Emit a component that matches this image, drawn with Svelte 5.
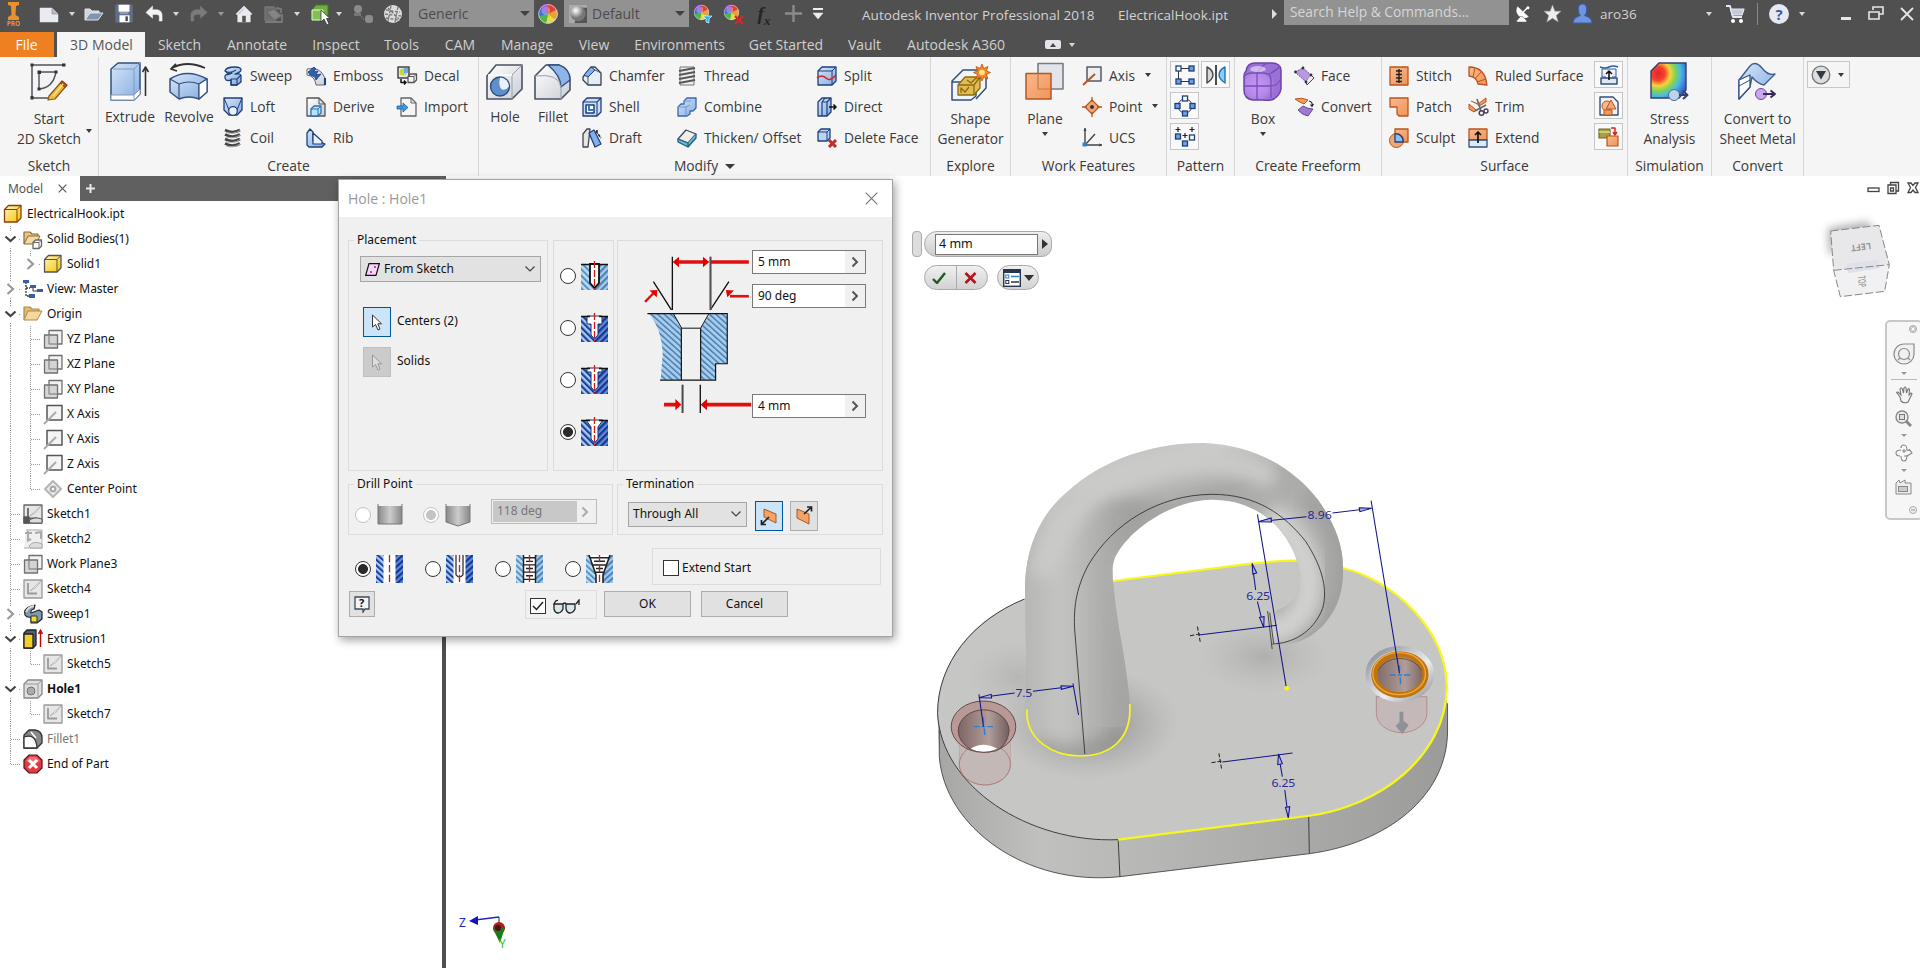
<script>
  const p = (d, fill = 'none', stroke = '#1d3f7d', sw = 1.3, extra = '') =>
    `<path d="${d}" fill="${fill}" stroke="${stroke}" stroke-width="${sw}" stroke-linejoin="round" ${extra}/>`;
  const B = 'url(#gBlue)', G = 'url(#gGrey)', O = 'url(#gOrange)', Y = 'url(#gYellow)';
  const OR = '#b8561f';
  const cube = (x, y, s, d, fill, st = '#1d3f7d') =>
    p(`M${x} ${y + d}L${x + d} ${y}H${x + s + d}V${y + s}L${x + s} ${y + s + d}H${x}Z`, fill, st) +
    p(`M${x} ${y + d}H${x + s}V${y + s + d}M${x + s} ${y + d}L${x + s + d} ${y}`, 'none', st, 1);

  const planePair = p('M6 1.500H19V15H6Z', '#f2f2f2', '#707070') + p('M1.500 6H14.500V19H1.500Z', '#cccccccc', '#707070') + p('M6 6V15H14.500', 'none', '#888', 1);
  const axisGrey = p('M4 1.500H19V16H4Z', '#f4f4f4', '#555', 1.500) + p('M1 20L13 8', 'none', '#aaa', 2);
  const sketchIcon = (c) => p('M1 1H19V19H1Z', '#e6e6e6', c, 1.300) + p('M5 4V14.500H14', 'none', c, 1.800) + p('M7 12Q13 10 18 2L9 10Z', '#fff', '#aaa', .8);
  const wheel = '<circle cx="10" cy="10" r="8.500" fill="#3b6fd8"/><path d="M10 10L2 5A9 9 0 0 1 10 1Z" fill="#8a3fd0"/><path d="M10 10V1A9 9 0 0 1 18 6Z" fill="#e3402f"/><path d="M10 10L18 6A9 9 0 0 1 17 15Z" fill="#f0a030"/><path d="M10 10L17 15A9 9 0 0 1 8 18.500Z" fill="#e8dc3c"/><path d="M10 10L8 18.500A9 9 0 0 1 1.500 12Z" fill="#4fb648"/><circle cx="8" cy="7" r="4" fill="#fff" opacity=".3"/><circle cx="10" cy="10" r="8.500" fill="none" stroke="#ccd" stroke-width=".8"/>';

  const icons = {
    sweep: p('M3 14Q0 9 5 8L9 7Q4 8 2 5Q3 1 12 1Q18 1 18 4Q18 6 12 8Q18 7 18 10V16L14 19H8V14Q5 15 3 14Z', B) + p('M8 13H14V19H8ZM14 13L18 9M2 5Q7 8 13 4M9 7L4 9', 'none', '#1d3f7d', 1.1),
    loft: p('M1 1H19V13L14 18H6L1 13Z', B) + p('M1 1L6 13M19 1L14 13', 'none', '#1d3f7d', 1) + '<circle cx="10" cy="14" r="4.300" fill="#eef4fd" stroke="#1d3f7d" stroke-width="1.200"/>',
    coil: [2, 6.5, 11, 15.500].map((y) => p(`M2 ${y}Q10 ${y + 4} 17 ${y}`, 'none', '#444', 2.600) + p(`M3 ${y + 2.500}Q10 ${y + 5} 17 ${y + .5}`, 'none', '#aaa', 1)).join(''),
    emboss: p('M1 3Q14 0 19 12V19L10 19Q9 10 1 9Z', G, '#667', 1) + p('M2 6L8 1L10 3L7 6L12 5L10 9L15 8L10 14L9 11L4 9Z', '#2f62b0', '#173d7c', .8) + p('M19 12V19', 'none', '#1d3f7d', 2),
    derive: p('M1 19V1H13L19 7V19Z', G, '#555') + p('M13 1V7H19', 'none', '#555', 1) + cube(5, 9, 7, 3, '#bfe0fb', '#2572b5'),
    rib: p('M1 5L4 1L7 4V13H13L19 16L16 19H3L1 17Z', B) + p('M7 5L16 13V16H7Z', '#e9f1fc', '#1d3f7d', 1.200),
    decal: p('M1 1H12V12H1Z', '#dfe7ef', '#444', 1.500) + '<circle cx="6" cy="6" r="3.500" fill="#c9d63a"/><rect x="7" y="2" width="4" height="5" fill="#6dabd8"/>' + cube(11, 8, 6, 2.500, '#f4f4f4', '#555') + p('M4 13V16.500H9M7 14.500L9 16.500L7 18.500', 'none', '#111', 1.500),
    import: p('M4 1H14L19 6V19H4Z', '#f5f5f5', '#666') + p('M14 1V6H19', 'none', '#666', 1) + p('M0 9H6V6L11 10.500L6 15V12H0Z', '#3b9ae0', '#1f5f9e', .8),
    chamfer: p('M1 11L9 1H13L19 7V19H6L1 14Z', '#e6ecf4', '#333f55') + p('M2 9L9 1L13 4L6 11Z', '#7fb1ea', '#1d3f7d', 1) + p('M6 11V19M13 4L19 7', 'none', '#555', 1),
    shell: p('M1 5L5 1H19V15L15 19H1Z', '#ccdcf3') + p('M1 5H15V19M15 5L19 1', 'none', '#1d3f7d', 1.100) + p('M4 8H12V16H4Z', '#fff', '#173d7c', 1.500) + p('M7 8V13H12', 'none', '#3a74c8', 2),
    draft: p('M1 6L5 1H8L6 19H1Z', '#e6e6e6', '#445') + p('M7 5L12 2L19 16L13 19Z', '#83b0e8') + p('M14 3L19 10M15 2V6', 'none', '#222', 1.500, 'stroke-dasharray="3 1"'),
    thread: p('M3 1H17V19H3Z', '#eee', '#777', 1) + [3, 7, 11, 15].map((y) => p(`M2 ${y + 2}L18 ${y - 1}`, 'none', '#555', 1.800)).join(''),
    combine: p('M7 4L10 1H19V11L16 14H13V17L10 19H1V10L4 7H7Z', B, '#3568ae') + p('M1 10H9V19M7 4H14M9 10L13 8', 'none', '#6f97cf', 1),
    thicken: p('M1 11L9 2L19 6L11 15Z', '#f0f0ea', '#445') + p('M1 11V14L11 19V15ZM11 15V19L19 10V6', '#6cb4dc', '#23617f'),
    split: p('M1 5L5 1H19V15L15 19H1Z', B) + p('M1 5H15M15 5L19 1M15 5V19', 'none', '#1d3f7d', 1) + p('M0 12Q5 8 9 12T19 9', 'none', '#d22', 1.600),
    direct: p('M1 5L5 1H14V15L10 19H1Z', B) + p('M5 5H10V19M5 5V19M5 5L8 1M10 5L14 1', 'none', '#1d3f7d', 1.200) + p('M12 10H19M16.500 7.500L19 10L16.500 12.500', 'none', '#111', 1.600),
    delface: cube(1, 1, 9, 3, '#bcd3f2') + p('M12 12L19 19M19 12L12 19', 'none', '#c22a2a', 3),
    axis: p('M5 1H19V15H5Z', '#eceef1', '#555b63', 1.500) + p('M1 19L13 8', 'none', '#b8561f', 2),
    point: p('M10 3L17 10L10 17L3 10Z', '#f3a674', OR, 1.200) + p('M10 0V5M10 15V20M0 10H5M15 10H20', 'none', OR, 1.300) + '<circle cx="10" cy="10" r="2" fill="#333"/>',
    ucs: p('M3 1V17H19M3 17L13 6', 'none', '#444', 1.400) + p('M2 3L3 0L4 3M17 16L20 17L17 18', 'none', '#444', 1) + '<rect x=".5" y="14.500" width="4" height="4" fill="#2a86d8"/>',
    rectpat: [[1, 1, '#fff'], [14, 1, '#6f9fe8'], [1, 14, '#6f9fe8'], [14, 14, '#6f9fe8']].map(([x, y, f]) => `<rect x="${x}" y="${y}" width="5" height="5" fill="${f}" stroke="#1d3f7d" stroke-width="1.300"/>`).join('') + p('M6 3.500H14M3.500 6V14M6 16.500H14', 'none', '#333', 1),
    mirror: p('M1 2Q7 5 7 10Q7 14 1 18Z', '#d8d8d8', '#444', 1.400) + p('M10 0V20', 'none', '#111', 1.500) + p('M19 2Q13 5 13 10Q13 14 19 18Z', '#8bcdf0', '#1c77ad', 1.400),
    circpat: '<circle cx="10" cy="10" r="7" fill="none" stroke="#444"/>' + [[7.500, 0, '#fff'], [7.500, 15, '#6f9fe8'], [0, 7.500, '#6f9fe8'], [15, 7.500, '#6f9fe8']].map(([x, y, f]) => `<rect x="${x}" y="${y}" width="5" height="5" fill="${f}" stroke="#1d3f7d" stroke-width="1.300"/>`).join(''),
    skpat: [[0, 7, '#6f9fe8'], [7, 14, '#6f9fe8'], [14, 8, '#fff']].map(([x, y, f]) => `<rect x="${x + .5}" y="${y}" width="5" height="5" fill="${f}" stroke="#1d3f7d" stroke-width="1.300"/>`).join('') + p('M3 0V5M.5 2.500H5.500M17 0V5M14.500 2.500H19.500M10 6V11M7.500 8.500H12.500', 'none', '#222', 1.200),
    face: p('M1 6L9 2L17 9L12 16Z', '#b898e4', '#6a4c98', 1, 'stroke-dasharray="2 1"') + p('M17 9L20 12L13 19L12 16', '#eee', '#444', 1) + [[1.500, 6], [9, 2], [17, 9], [12, 16]].map(([x, y]) => `<circle cx="${x}" cy="${y}" r="1.400" fill="#333"/>`).join(''),
    convertf: p('M1 2Q8 0 14 3L10 7Q5 5 1 2Z', '#f39a5c', OR, 1) + p('M4 13L9 9Q14 12 19 12L14 19Q8 18 4 13Z', '#9f78d2', '#6a4c98', 1) + p('M15 4Q19 5 18 9M16.500 7.500L18 9.500L19.500 7', 'none', '#222', 1.100),
    stitch: p('M1 1H19V19H1Z', O, OR) + p('M10 3V17M7 5H13M7 8.500H13M7 12H13M7 15.500H13', 'none', '#222', 1.400),
    patch: p('M1 1H19V19H10L8 17V10H1Z', O, OR),
    sculpt: p('M6 1H19V14H6Z', O, OR) + '<circle cx="7.500" cy="12.500" r="7" fill="#f3a674" stroke="#b8561f"/>' + p('M6 6A7 7 0 0 1 14 14H6Z', '#8fc1f0', '#1d3f7d'),
    ruled: p('M1 1Q17 1 19 19L10 18Q9 11 1 10Z', O, OR) + p('M7 2L5 11M13 6L7 13M18 13L9 16', 'none', OR, 1),
    trim: p('M3 4L10 7L18 1V5L11 9M1 7L8 13L6 15L1 12Z', '#f39a5c', OR, 1) + p('M9 2L13 14M18 8L7 14', 'none', '#666', 1.600) + '<circle cx="13.500" cy="16" r="2.300" fill="none" stroke="#445" stroke-width="1.500"/><circle cx="18" cy="14" r="2" fill="none" stroke="#445" stroke-width="1.400"/>',
    extend: p('M1 1H19V12H1Z', O, OR) + p('M1 12H19V19H1Z', '#dce9f6', '#34507a') + p('M10 15V4M7 7L10 4L13 7', 'none', '#111', 1.700),
    sbtn1: p('M1 2Q6 4 10 2T19 2', 'none', '#2a5fa8', 1.500) + p('M3 4V12H7M17 4V12H13M3 4H17', '#dfeaf7', '#2a5fa8', 1) + p('M2 13H18V19H2Z', '#dfe7f0', '#34507a', 1.500) + p('M10 15V6M7 9L10 6L13 9', 'none', '#111', 1.600),
    sbtn2: p('M1 1H14L19 6V19H1Z', '#eef3f9', '#34507a', 1.400) + '<circle cx="8" cy="10" r="5" fill="#f7b98c" stroke="#b8561f"/>' + p('M12 4L17 13H7Z', '#f3a674', OR, 1) + p('M5 14H13V19H5Z', '#f39a5c', OR, 1),
    sbtn3: p('M0 2H11V11H0Z', '#a8a040', '#6f6a20', 1.200) + p('M0 5H11', 'none', '#e8e6b0', 1.200) + p('M8 9H19V19H8Z', O, OR, 1.200) + p('M12 1H16V7M14 5L16 8L18 5', 'none', '#d22', 1.500),

    b_sketch: p('M3 3H34M3 3V36H22', 'none', '#50525c', 1.500) + '<rect x="1.500" y="1.500" width="3" height="3" fill="#333"/><rect x="33" y="1.500" width="3.500" height="3" fill="#333"/><rect x="1.500" y="34" width="3" height="3.500" fill="#333"/>' + p('M10 10H27M10 10V27Q24 26 27 10', '#f3f3f3', '#50525c', 1.400) + '<rect x="8.500" y="8.500" width="3.500" height="3.500" fill="#333"/><rect x="25.500" y="8.500" width="3" height="3" fill="#333"/><rect x="8.500" y="25.500" width="3" height="3" fill="#333"/>' + p('M20 34L33 19L38 23L26 37L19 38Z', '#f2b93a', '#8a5a1a', 1.200) + p('M33 19L38 23L36 25.500L31 21Z', '#b8523a', '#7a3418', .8) + p('M24 34L34 22', 'none', '#fae08a', 1.500),
    b_extrude: p('M1 7L8 1H30V32L24 38H1Z', B, '#33507f', 1.500) + p('M1 33L24 33L30 27V32L24 38H1Z', '#fff', '#8a97ac', 1) + p('M3 7H24V37M24 7L30 1', 'none', '#7b9dca', 1) + p('M35.500 34V6M32.500 10L35.500 5L38.500 10', 'none', '#333', 1.600),
    b_revolve: p('M3 6Q18 -2 36 6M7 2L2 7L8 9', 'none', '#333', 1.800) + p('M1 17Q18 6 38 17V30L30 37Q20 33 10 37L1 30Z', B, '#33507f', 1.500) + p('M1 17L10 22Q20 18 30 22L38 17M10 22V37M30 22V37', 'none', '#33507f', 1.200) + p('M30 22L38 17V30L30 37Z', '#fff', '#33507f', 1.200),
    b_hole: p('M2 14L11 3H37V27L27 37H2Z', G, '#4a5161', 1.600) + p('M27 13L37 3M27 13V37', 'none', '#9aa0aa', 1) + p('M3 13H27', 'none', '#fff', 1.500) + '<circle cx="15" cy="24.500" r="9.500" fill="#5e8ecb" stroke="#2f4d7e" stroke-width="1.400"/><path d="M15 15.500A9 9 0 0 1 24 24.500Q21 28.500 17 27.500Q13 24.500 15 15.500Z" fill="#e8f1fc"/>',
    b_fillet: p('M2 14L13 3H26Q37 7 37 18V28L28 37H2Z', G, '#4a5161', 1.600) + p('M15 3H26Q37 7 37 18L28 25Q28 14 15 3Z', '#8db5ea', '#2f4d7e', 1.300) + p('M28 24V37M2 14Q26 11 28 25', 'none', '#9aa0aa', 1),
    b_shape: p('M1 19L12 8H31L25 21V34L20 38H1Z', '#f1f4f8', '#34507a', 1.500) + p('M25 20L35 12V26L25 37M1 20H25', 'none', '#34507a', 1.500) + p('M7 23L14 15H29V26L23 33H7Z', '#e0bd4e', '#8c6a14', 1.300) + p('M7 23H23V33M10 31V26L14 30L18 25M23 23L29 15M16 18L20 21L25 16', 'none', '#8c6a14', 1.300) + '<path d="M31 2L32.800 6.500L37 4.500L35.500 9L39.500 10.500L35.500 12.500L37 17L32.800 15L31 19L29.200 15L25 17L26.500 12.500L22.500 10.500L26.500 9L25 4.500L29.200 6.500Z" fill="#f08a24" stroke="#c65010" stroke-width=".8"/><circle cx="31" cy="10.500" r="2.800" fill="#ffe28a"/>',
    b_plane: p('M13 1.500H38V27H13Z', '#e2e4e9', '#777c88', 1.600) + p('M1 11.500H26V37H1Z', O, OR, 1.500) + p('M13 11.500V27H26', 'none', '#c77a4a', 1.200),
    b_box: '<path d="M3 9Q4 1 12 1H29Q37 1 38 8V27Q37 33 31 37Q27 39 20 38H10Q1 37 1 28V14Q1 11 3 9Z" fill="url(#gPurple)" stroke="#6d43a8" stroke-width="1.500"/>' + p('M1 15Q3 11 9 11H20Q28 11 28 18V36M14 11V38M1 24H28Q34 24 38 17M14 11Q17 5 24 1M26 12Q34 8 37 4', 'none', '#7a4fb8', 1.300) + '<ellipse cx="15" cy="7" rx="8" ry="3" fill="#fff" opacity=".5"/>',
    b_stress: '<path d="M1 9L9 1H36V28L29 36H1Z" fill="url(#gStress)" stroke="#33406f" stroke-width="1.400"/>' + '<circle cx="24" cy="33" r="5.500" fill="#bcd3ee" stroke="#4a6c9c"/>' + p('M29 33H36M33 29L37.500 33L33 37', 'none', '#34406f', 2),
    b_sheet: p('M1 18L12 4Q17 -2 24 6Q30 14 37 12L26 23Q20 22 14 15L12 25L1 37Z', B, '#3d5f94', 1.400) + p('M1 18L12 13V25L1 37Z', '#fff', '#33507f', 1.300) + p('M1 24L12 18', 'none', '#33507f', 1) + '<circle cx="23" cy="32" r="5.500" fill="#c9a9ec" stroke="#6d43a8"/>' + p('M25 32H36M32.500 28.500L37 32L32.500 35.500', 'none', '#3c2560', 2),

    t_part: cube(1.500, 1.500, 12.500, 4, Y, '#8a3d10'),
    t_folder2: p('M1 15V3H7L9 5H15V8', '#e8c586', '#8a6a35', 1.200) + p('M1 15L5 7H17L13 15Z', '#f1d9a8', '#8a6a35', 1) + cube(10, 11, 6, 2.500, '#fff', '#666'),
    t_solid: cube(1.500, 1.500, 12.500, 4, Y, '#555'),
    t_view: p('M3 3V17H7M3 9H7', 'none', '#333', 1.300, 'stroke-dasharray="2 1"') + '<rect x="0" y="1" width="6" height="3" fill="#3b5f9a"/><rect x="7" y="6" width="6" height="3" fill="#3b5f9a"/><rect x="14" y="10" width="6" height="3" fill="#3b5f9a"/><rect x="6" y="15" width="6" height="4" fill="#3b5f9a"/>' + p('M10 9V12H14', 'none', '#333', 1),
    t_folder: p('M1 16V3H7L9 5H16V8', '#e2b870', '#b08a4c', 1.200) + p('M1 16L5 7H19L14 16Z', '#f5d79f', '#b08a4c', 1),
    t_plane: planePair,
    t_axis: axisGrey,
    t_point: p('M10 2L18 10L10 18L2 10Z', '#eee', '#b5b5b5', 2) + '<circle cx="10" cy="10" r="3.500" fill="#aaa"/><circle cx="10" cy="10" r="1.200" fill="#fff"/>',
    t_sketchA: sketchIcon('#666') + p('M1 13H6V19H1Z', '#555', '#555') + p('M6 17Q10 12 19 15V19H8Z', '#ddd', '#555', 1),
    t_sketchB: p('M3 1H19V19H1', '#efefef', '#c4c4c4', 1.300) + p('M2 4H9M5 2V12M4 12L8 10M12 4L18 3V10', 'none', '#aaa', 2) + p('M6 17Q10 11 19 15V19H8Z', '#ddd', '#aaa', 1),
    t_sketch: sketchIcon('#9a9a9a'),
    t_sweep: p('M2 11Q0 5 8 2L12 1L11 5Q7 6 8 9L16 6L19 8V15L14 19H8V13Q4 14 2 11Z', '#7f99b5', '#222', 1.200) + p('M3 8Q5 3 11 2', 'none', '#ddd', 2) + p('M8 12H14V18H8Z', '#f4dd2c', '#333', 1),
    t_extr: p('M1 4L4 1H13V16L10 19H1Z', '#506070', '#222') + p('M1 5H10V19H1Z', '#f3cf2e', '#222') + p('M17.500 18V3M15.500 5L17.500 1L19.500 5', 'none', '#c00', 1.400),
    t_hole: p('M1 5L5 1H19V15L15 19H1Z', '#dedede', '#888') + p('M1 5H15V19M15 5L19 1', 'none', '#999', 1) + '<circle cx="8" cy="12" r="4" fill="#aaa" stroke="#777"/>',
    t_fillet: p('M1 6L6 1H12Q19 2 19 9V14L14 19H1Z', '#888', '#333') + p('M1 8Q13 4 14 19H1Z', '#fff', '#333') + p('M8 3L13 9', 'none', '#fff', 1.500),
    t_end: '<path d="M6 1H14L19 6V14L14 19H6L1 14V6Z" fill="#e23a44" stroke="#55151a" stroke-width="1.200"/><path d="M3 7L7 3H13L17 7L10 10Z" fill="#ff9ca0" opacity=".6"/>' + p('M6 6L14 14M14 6L6 14', 'none', '#fff', 3),

    q_new: p('M1 4H13L19 10V18H1Z', '#e8ebf0', '#e8ebf0', .5) + p('M13 4V10H19', '#b5bac4', '#999', .8),
    q_open: p('M1 16V5H6L8 7H15V9', '#cfd6e2', '#dfe3ea', 1) + p('M1 16L6 9H19L14 16Z', '#8293ad', '#dfe3ea', 1),
    q_save: p('M1 1H18V19H1Z', '#5d6b86', '#6a7690', 1) + p('M4 1H15V8H4ZM5 12H15V19H5Z', '#fff', '#fff', .5) + p('M5 9.500H14', 'none', '#ccd', 1) + '<rect x="11" y="13" width="2.500" height="5" fill="#444"/>',
    q_undo: p('M1 9L8 2V6H13Q18 7 18 12V18H15V13Q15 11 12 11H8V15Z', '#f2f2f2', '#f2f2f2', .5),
    q_redo: p('M19 9L12 2V6H7Q2 7 2 12V18H5V13Q5 11 8 11H12V15Z', '#7b7b7b', '#7b7b7b', .5),
    q_home: p('M10 1L19 10L17 11V19H3V11L1 10Z', '#e9ebf0', '#e9ebf0', .5) + p('M10 4L4 10', 'none', '#999', .8) + '<rect x="8" y="12" width="4" height="7" fill="#555"/>',
    q_upd: p('M1 3H10L12 6V16H1Z', '#6c6c6c', '#777', 1.300) + p('M3 8L10 5L18 12L10 16Z', '#858585', '#6c6c6c', 1.300) + p('M1 18H18V10M12 4L17 5V9', 'none', '#7a7a7a', 1.800),
    q_green: p('M2 6L6 1H18V11L13 16H2Z', '#6fae3e', '#3f7c22', 1) + p('M2 6H13V16H2Z', '#7fc252', '#e8f5df', 1) + p('M11 6V18L14 15L17 21L19 20L16.500 14.500H20Z', '#fff', '#222', .7),
    q_parts: '<circle cx="5" cy="5" r="4" fill="#8b8b8b"/><rect x="1" y="9" width="7" height="3" fill="#777"/><rect x="12" y="11" width="8" height="8" rx="3" fill="#8b8b8b"/><path d="M8 12L11 16" stroke="#777"/>',
    q_globe: '<circle cx="10" cy="10" r="9" fill="#dcdcdc"/>' + p('M3 6L17 8M3 14L15 16M8 2L5 17M15 3L12 18M2 10L18 12M5 4L16 15', 'none', '#777', 1.300, 'stroke-dasharray="3 1.500"'),
    q_wheel: wheel,
    q_ball: '<rect width="20" height="20" fill="#aaa"/><path d="M14 3H20V20H6Z" fill="#555"/><circle cx="10" cy="9.500" r="8.500" fill="url(#gBall)"/>',
    q_wheelf: `<g transform="scale(.85)">${wheel}</g>` + p('M10 12H19L16 15V19L13 18V15Z', '#31b4ea', '#e6f6fd', .7),
    q_wheelx: `<g transform="scale(.85)">${wheel}</g>` + p('M12 12L20 20M20 12L12 20', 'none', '#e02424', 2.200),
    q_plus: p('M10 1V19M1 10H19', 'none', '#8a8a8a', 2.500),
    q_more: p('M5 5H15', 'none', '#eee', 2) + p('M5 9H15L10 15Z', '#eee', '#eee', .5),
    q_dish: p('M4 2Q1 9 7 13Q11 16 16 13Z', '#fff', '#fff', .6) + p('M10 8L15 3', 'none', '#fff', 1.600) + '<circle cx="15.500" cy="3" r="1.700" fill="#fff"/>' + p('M3 19H14V17.500L10 13H7L3 17.500Z', '#fff', '#505050', .6),
    q_star: p('M10 1L12.500 7.500H19L14 12L16 19L10 15L4 19L6 12L1 7.500H7.500Z', '#eceef2', '#999', .6),
    q_user: p('M6 6Q6 1 10 1T14 6Q14 10 12 12Q19 14 19 19H1Q1 14 8 12Q6 10 6 6Z', '#6f94e0', '#3c5ea8', 1),
    q_cart: p('M1 2H5L8 13H17', 'none', '#e6e9f2', 1.800) + p('M5.500 5H19L17 11H7.200Z', '#c4cadb', '#e6e9f2', 1.200) + '<circle cx="8" cy="17" r="2" fill="#fff"/><circle cx="16" cy="17" r="2" fill="#fff"/>',
  };

  // Quick access bar: kind, left edge, width
  const quick = [
    { i: 'q_new', x: 39, w: 20 }, { c: 1, x: 68, w: 8 }, { i: 'q_open', x: 84, w: 20 }, { i: 'q_save', x: 115, w: 19 },
    { i: 'q_undo', x: 145, w: 19 }, { c: 1, x: 172, w: 8 }, { i: 'q_redo', x: 189, w: 19 }, { c: 1, x: 217, w: 8, dim: 1 },
    { i: 'q_home', x: 235, w: 18 }, { i: 'q_upd', x: 264, w: 20 }, { c: 1, x: 293, w: 8 }, { i: 'q_green', x: 310, w: 20 },
    { c: 1, x: 335, w: 8 }, { i: 'q_parts', x: 353, w: 20 }, { i: 'q_globe', x: 383, w: 20 }, { combo: 'Generic', x: 409, w: 125 },
    { i: 'q_wheel', x: 537, w: 22 }, { combo: 'Default', ball: 1, x: 564, w: 125 }, { i: 'q_wheelf', x: 693, w: 20 },
    { i: 'q_wheelx', x: 723, w: 20 }, { fx: 1, x: 755, w: 18 }, { i: 'q_plus', x: 784, w: 19 }, { i: 'q_more', x: 808, w: 20 },
    { t: 'Autodesk Inventor Professional 2018', x: 862, w: 242, low: 1, wide: 1 }, { t: 'ElectricalHook.ipt', x: 1118, w: 120, low: 1, wide: 1 },
    { r: 1, x: 1272, w: 5 }, { search: 1, x: 1284, w: 225 }, { i: 'q_dish', x: 1514, w: 18 }, { i: 'q_star', x: 1543, w: 19 },
    { i: 'q_user', x: 1572, w: 21 }, { t: 'aro36', x: 1600, w: 40, wide: 1 }, { c: 1, x: 1705, w: 8 }, { i: 'q_cart', x: 1725, w: 20 },
    { sep: 1, x: 1757, w: 1 }, { help: 1, x: 1769, w: 20 }, { c: 1, x: 1798, w: 8 }, { min: 1, x: 1840, w: 11 },
    { rest: 1, x: 1868, w: 16 }, { close: 1, x: 1899, w: 15 },
  ].map((q, n, all) => ({ ...q, gap: q.x - (n ? all[n - 1].x + all[n - 1].w : 0) }));

  const tabs = [
    ['Sketch', 68], ['Annotate', 87], ['Inspect', 71], ['Tools', 60], ['CAM', 57], ['Manage', 77], ['View', 57],
    ['Environments', 114], ['Get Started', 99], ['Vault', 58], ['Autodesk A360', 125],
  ];

  const panels = [
    { label: 'Sketch', w: 99, cols: [{ w: 98, big: 'b_sketch', text: ['Start', '2D Sketch'], side: 1 }] },
    { label: 'Create', w: 380, cols: [
      { w: 62, big: 'b_extrude', text: ['Extrude'] }, { w: 56, big: 'b_revolve', text: ['Revolve'] },
      { w: 89, pad: 6, rows: [['sweep', 'Sweep'], ['loft', 'Loft'], ['coil', 'Coil']] },
      { w: 91, rows: [['emboss', 'Emboss'], ['derive', 'Derive'], ['rib', 'Rib']] },
      { w: 80, rows: [['decal', 'Decal'], ['import', 'Import']] } ] },
    { label: 'Modify', w: 452, more: 1, cols: [
      { w: 52, big: 'b_hole', text: ['Hole'] }, { w: 44, big: 'b_fillet', text: ['Fillet'] },
      { w: 102, pad: 7, rows: [['chamfer', 'Chamfer'], ['shell', 'Shell'], ['draft', 'Draft']] },
      { w: 140, rows: [['thread', 'Thread'], ['combine', 'Combine'], ['thicken', 'Thicken/ Offset']] },
      { w: 112, rows: [['split', 'Split'], ['direct', 'Direct'], ['delface', 'Delete Face']] } ] },
    { label: 'Explore', w: 80, cols: [{ w: 79, big: 'b_shape', text: ['Shape', 'Generator'] }] },
    { label: 'Work Features', w: 156, cols: [
      { w: 68, big: 'b_plane', text: ['Plane'], under: 1 },
      { w: 87, pad: 3, rows: [['axis', 'Axis', 3], ['point', 'Point', 3], ['ucs', 'UCS']] } ] },
    { label: 'Pattern', w: 68, cols: [{ w: 34, pad: 3, btns: ['rectpat', 'circpat', 'skpat'] }, { w: 30, btns: ['mirror'] }] },
    { label: 'Create Freeform', w: 147, cols: [
      { w: 56, big: 'b_box', text: ['Box'], under: 1 }, { w: 90, pad: 3, rows: [['face', 'Face'], ['convertf', 'Convert']] } ] },
    { label: 'Surface', w: 246, cols: [
      { w: 86, pad: 7, rows: [['stitch', 'Stitch'], ['patch', 'Patch'], ['sculpt', 'Sculpt']] },
      { w: 126, rows: [['ruled', 'Ruled Surface'], ['trim', 'Trim'], ['extend', 'Extend']] },
      { w: 30, btns: ['sbtn1', 'sbtn2', 'sbtn3'] } ] },
    { label: 'Simulation', w: 84, cols: [{ w: 83, big: 'b_stress', text: ['Stress', 'Analysis'] }] },
    { label: 'Convert', w: 92, cols: [{ w: 91, big: 'b_sheet', text: ['Convert to', 'Sheet Metal'] }] },
  ];

  // depth, icon, text, expander, class
  const tree = [
    [0, 't_part', 'ElectricalHook.ipt', '', 'root'], [1, 't_folder2', 'Solid Bodies(1)', 'v'], [2, 't_solid', 'Solid1', '>'],
    [1, 't_view', 'View: Master', '>'], [1, 't_folder', 'Origin', 'v'], [2, 't_plane', 'YZ Plane'], [2, 't_plane', 'XZ Plane'],
    [2, 't_plane', 'XY Plane'], [2, 't_axis', 'X Axis'], [2, 't_axis', 'Y Axis'], [2, 't_axis', 'Z Axis'],
    [2, 't_point', 'Center Point'], [1, 't_sketchA', 'Sketch1'], [1, 't_sketchB', 'Sketch2'], [1, 't_plane', 'Work Plane3'],
    [1, 't_sketch', 'Sketch4'], [1, 't_sweep', 'Sweep1', '>'], [1, 't_extr', 'Extrusion1', 'v'], [2, 't_sketch', 'Sketch5'],
    [1, 't_hole', 'Hole1', 'v', 'bold'], [2, 't_sketch', 'Sketch7'], [1, 't_fillet', 'Fillet1', '', 'dim'], [1, 't_end', 'End of Part'],
  ];
  const lastRow = tree.length - 1;

  const heads = [
    'M9 0H18V19L13.500 24L9 19Z', 'M6 0H21V8H17V19L13.500 23L10 19V8H6Z',
    'M6 0H21V4H17V19L13.500 23L10 19V4H6Z', 'M5 0H22L17 7V19L13.500 23L10 19V7Z',
  ];
  const kinds = ['plain', 'clear', 'tapped', 'taper'];
</script>

{#snippet ico(name, w, box = 20)}
  <svg class="ico" width={w} height={w} viewBox="0 0 {box} {box}">{@html icons[name]}</svg>
{/snippet}

{#snippet radio(on, dim = false)}
  <span class="radio" class:on class:dimmed={dim}></span>
{/snippet}

{#snippet value(text)}
  <div class="value"><span>{text}</span><i><svg width="8" height="12" viewBox="0 0 8 12"><path d="M1.500 1.500L6 6L1.500 10.500" fill="none" stroke="#555" stroke-width="2" /></svg></i></div>
{/snippet}

{#snippet chev()}
  <svg width="10" height="6" viewBox="0 0 10 6"><path d="M.5 .5L5 5L9.500 .5" fill="none" stroke="#444" stroke-width="1.200" /></svg>
{/snippet}

<svg class="defs" width="0" height="0">
  <defs>
    <linearGradient id="gBlue" x1="0" y1="0" x2="1" y2="1"><stop offset="0" stop-color="#d6e5f8" /><stop offset="1" stop-color="#86ace0" /></linearGradient>
    <linearGradient id="gGrey" x1="0" y1="0" x2="1" y2="1"><stop offset="0" stop-color="#ffffff" /><stop offset="1" stop-color="#c9cdd4" /></linearGradient>
    <linearGradient id="gOrange" x1="0" y1="0" x2="1" y2="1"><stop offset="0" stop-color="#f9b98b" /><stop offset="1" stop-color="#f0945a" /></linearGradient>
    <linearGradient id="gYellow" x1="0" y1="0" x2="1" y2="1"><stop offset="0" stop-color="#fff6c0" /><stop offset="1" stop-color="#f5c400" /></linearGradient>
    <radialGradient id="gPurple" cx=".35" cy=".6"><stop offset="0" stop-color="#c893f7" /><stop offset=".6" stop-color="#b48ae8" /><stop offset="1" stop-color="#9a6fd6" /></radialGradient>
    <radialGradient id="gBall" cx=".35" cy=".3"><stop offset="0" stop-color="#fff" /><stop offset="1" stop-color="#777" /></radialGradient>
    <radialGradient id="gStress" cx=".2" cy=".3" r="1"><stop offset="0" stop-color="#e8232c" /><stop offset=".2" stop-color="#f2442c" /><stop offset=".35" stop-color="#f8d23a" /><stop offset=".5" stop-color="#7fd455" /><stop offset=".65" stop-color="#49b9e6" /><stop offset=".85" stop-color="#3a66cc" /></radialGradient>
    <pattern id="hDark" width="4.500" height="4.500" patternUnits="userSpaceOnUse" patternTransform="rotate(-45)"><rect width="4.500" height="4.500" fill="#a9ccf7" /><rect width="2.200" height="4.500" fill="#1c409a" /></pattern>
    <pattern id="hDarkR" width="4.500" height="4.500" patternUnits="userSpaceOnUse" patternTransform="rotate(45)"><rect width="4.500" height="4.500" fill="#5f8cd8" /><rect width="2.200" height="4.500" fill="#17358c" /></pattern>
    <pattern id="hLight" width="4.500" height="4.500" patternUnits="userSpaceOnUse" patternTransform="rotate(-45)"><rect width="4.500" height="4.500" fill="#b8dcf7" /><rect width="2" height="4.500" fill="#5b8dbb" /></pattern>
    <pattern id="hLightR" width="4.500" height="4.500" patternUnits="userSpaceOnUse" patternTransform="rotate(45)"><rect width="4.500" height="4.500" fill="#a5cdef" /><rect width="2.200" height="4.500" fill="#4f81b2" /></pattern>
    <linearGradient id="gDrill"><stop offset="0" stop-color="#888" /><stop offset=".5" stop-color="#ccc" /><stop offset="1" stop-color="#888" /></linearGradient>
  </defs>
</svg>

<div class="app">
  <header class="titlebar">
    <div class="logo"><svg width="11" height="18" viewBox="0 0 11 18"><path d="M0 0H11V3L8 4L7.500 13L11 15V18H0V15L3.500 13L3 4L0 3Z" fill="#e8912f" /></svg><b>PRO</b></div>
    <div class="quick">
      {#each quick as q}
        <div class="q" class:low={q.low} style:margin-left="{q.gap}px" style:width="{q.w}px">
          {#if q.i}{@render ico(q.i, q.w)}
          {:else if q.c}<span class="caret light" class:faint={q.dim}></span>
          {:else if q.combo}
            <div class="combo">{#if q.ball}{@render ico('q_ball', 18)}{/if}<span>{q.combo}</span><span class="caret big dark"></span></div>
          {:else if q.fx}<span class="fx">f<sub>x</sub></span>
          {:else if q.t}<span class="qt">{q.t}</span>
          {:else if q.r}<span class="play"></span>
          {:else if q.search}<div class="search">Search Help &amp; Commands...</div>
          {:else if q.sep}<span class="vsep"></span>
          {:else if q.help}<span class="helpc">?</span>
          {:else if q.min}<span class="minb"></span>
          {:else if q.rest}<svg width="16" height="15" viewBox="0 0 16 15"><path d="M5 4V1H15V8H11M1 6H11V13H1Z" fill="none" stroke="#e6e6e6" stroke-width="1.600" /></svg>
          {:else}<svg width="14" height="14" viewBox="0 0 14 14"><path d="M1 1L13 13M13 1L1 13" stroke="#e6e6e6" stroke-width="1.800" /></svg>{/if}
        </div>
      {/each}
    </div>
  </header>

  <nav class="tabs">
    <div class="tab file">File</div>
    <div class="tab active">3D Model</div>
    {#each tabs as [name, w]}<div class="tab" style:width="{w}px">{name}</div>{/each}
    <div class="updown"><span class="pill"><i></i></span><span class="caret light"></span></div>
  </nav>

  <section class="ribbon">
    {#each panels as panel}
      <div class="panel" style:width="{panel.w}px">
        <div class="cols">
          {#each panel.cols as col}
            <div class="col" style:width="{col.w}px" style:padding-left="{col.pad || 0}px">
              {#if col.big}
                <div class="bigbtn" class:two={col.text.length > 1 || col.under}>
                  {@render ico(col.big, 40, 40)}
                  {#each col.text as line}<span>{line}</span>{/each}
                  {#if col.under}<i class="caret"></i>{/if}
                  {#if col.side}<i class="caret flank"></i>{/if}
                </div>
              {:else if col.rows}
                {#each col.rows as row}
                  <div class="item">{@render ico(row[0], 20)}<span>{row[1]}</span>{#if row[2]}<i class="caret" style:margin-left="{row[2]}px"></i>{/if}</div>
                {/each}
              {:else}
                {#each col.btns as b}<div class="sq">{@render ico(b, 20)}</div>{/each}
              {/if}
            </div>
          {/each}
        </div>
        <div class="plabel">{panel.label}{#if panel.more}<i class="caret big"></i>{/if}</div>
      </div>
    {/each}
    <div class="tailbtn"><svg width="20" height="20" viewBox="0 0 20 20"><circle cx="10" cy="10" r="8.800" fill="#ddd" stroke="#777" stroke-width="1.300" /><path d="M5 6H15L10 14.500Z" fill="#333a44" /></svg><i class="caret"></i></div>
  </section>

  <main class="work">
    <aside class="side">
      <div class="sidehead">
        <div class="mtab">Model<svg width="9" height="9" viewBox="0 0 9 9"><path d="M.7 .7L8.300 8.300M8.300 .7L.7 8.300" stroke="#555" stroke-width="1.200" /></svg></div>
        <div class="mplus"><svg width="9" height="9" viewBox="0 0 9 9"><path d="M4.500 0V9M0 4.500H9" stroke="#e8e8e8" stroke-width="2" /></svg></div>
      </div>
      <div class="tree">
        {#each tree as [depth, icon, text, exp, cls], n}
          <div class="node {cls || ''}">
            {#if depth >= 1}
              <svg width={depth === 1 ? 23 : 43} height="25" viewBox="0 0 {depth === 1 ? 23 : 43} 25">
                <g stroke="#999" stroke-dasharray="1 1" fill="none">
                  <path d="M10.500 0V{n === lastRow ? 13 : 25}" />
                  {#if depth === 1}<path d="M11 13.500H21" />
                  {:else}<path d="M30.500 0V{tree[n + 1] && tree[n + 1][0] === 2 ? 25 : 13}M31 13.500H41" />{/if}
                </g>
                {#if exp}
                  <rect x={depth === 1 ? 3 : 23} y="5" width="15" height="16" fill="#fff" />
                  <path d={exp === 'v' ? 'M5.500 10.500L10.500 15L15.500 10.500' : depth === 1 ? 'M7.500 8L13 13L7.500 18' : 'M27.500 8L33 13L27.500 18'} fill="none" stroke={exp === 'v' ? '#444' : '#999'} stroke-width="2.200" />
                {/if}
              </svg>
            {/if}
            {@render ico(icon, 20)}<span>{text}</span>
          </div>
        {/each}
      </div>
    </aside>

    <section class="view">
      <!-- hook part with its placement dimensions -->
      <svg class="part" width="550" height="460" viewBox="0 0 1568 1380" preserveAspectRatio="none">
        <defs>
          <linearGradient id="mSide" x1="50" y1="0" x2="1505" y2="0" gradientUnits="userSpaceOnUse"><stop offset="0" stop-color="#a6a6a4" /><stop offset=".2" stop-color="#c0c0be" /><stop offset=".38" stop-color="#b8b8b6" /><stop offset=".72" stop-color="#a9a9a7" /><stop offset="1" stop-color="#9b9b99" /></linearGradient>
          <linearGradient id="mLeg" x1="300" y1="0" x2="590" y2="0" gradientUnits="userSpaceOnUse"><stop offset="0" stop-color="#b6b6b4" /><stop offset=".35" stop-color="#c5c5c3" /><stop offset=".75" stop-color="#aeaeac" /><stop offset="1" stop-color="#a1a19f" /></linearGradient>
          <linearGradient id="mArch" x1="520" y1="60" x2="760" y2="760" gradientUnits="userSpaceOnUse"><stop offset="0" stop-color="#bebebc" /><stop offset=".13" stop-color="#cbcbc9" /><stop offset=".3" stop-color="#a8a8a6" /><stop offset=".5" stop-color="#b3b3b1" /><stop offset="1" stop-color="#a6a6a4" /></linearGradient>
          <radialGradient id="mShade"><stop offset="0" stop-color="#6f6f6f" stop-opacity=".75" /><stop offset="1" stop-color="#999" stop-opacity="0" /></radialGradient>
          <linearGradient id="mBore" x1="0" x2="1"><stop offset="0" stop-color="#7d6764" /><stop offset=".6" stop-color="#b09c99" /><stop offset="1" stop-color="#73605e" /></linearGradient>
          <linearGradient id="mRing" x1="0" y1="0" x2="1" y2="1"><stop offset="0" stop-color="#7d838d" /><stop offset=".3" stop-color="#b9bdc3" /><stop offset=".6" stop-color="#eceef0" /><stop offset="1" stop-color="#8b8f96" /></linearGradient>
          <filter id="soft" x="-30%" y="-30%" width="160%" height="160%"><feGaussianBlur stdDeviation="22" /></filter>
          <clipPath id="tube"><path d="M300 510C294 380 330 265 420 185C520 90 660 38 810 39C960 45 1070 120 1135 210C1180 275 1206 345 1206 410C1207 480 1195 530 1150 585C1110 630 1060 650 1004 643L1000 590L1018 540C1065 525 1088 490 1083 440C1078 400 1070 370 1055 345C1010 255 920 207 830 209C720 212 610 290 565 365C545 395 549 425 550 452Q556 520 568 600Q590 720 598 820Q600 975 455 978Q310 970 305 850Z" /></clipPath>
        </defs>
        <path d="M50 850C50 690 160 555 320 500L550 453L945 401Q1010 392 1075 392Q1150 395 1205 414C1350 450 1500 600 1502 770L1504 900C1505 1100 1330 1240 1110 1271L570 1340C300 1370 70 1190 55 980Z" fill="url(#mSide)" />
        <path d="M50 850C50 700 150 570 298 507L550 453L945 401Q1010 392 1075 392Q1150 395 1205 414C1350 450 1500 600 1502 770C1500 980 1310 1130 1105 1158L565 1229C310 1240 60 1070 50 850Z" fill="#c6c6c5" />
        <ellipse cx="480" cy="880" rx="260" ry="170" fill="url(#mShade)" />
        <ellipse cx="280" cy="740" rx="150" ry="110" fill="url(#mShade)" opacity=".25" />
        <ellipse cx="980" cy="680" rx="190" ry="110" fill="url(#mShade)" opacity=".35" />
        <path d="M55 900V980C70 1190 300 1370 570 1340L1110 1271C1330 1240 1505 1100 1504 900V820" fill="none" stroke="#3f3f3f" stroke-width="2.500" />
        <path d="M298 507C150 570 50 700 50 850C60 1070 310 1240 565 1229L570 1340M1108 1158L1110 1270" fill="none" stroke="#3a3a3a" stroke-width="2.800" />
        <path d="M550 453L945 401Q1010 392 1075 392M1205 414C1350 450 1500 600 1502 770C1500 980 1310 1130 1105 1158L565 1229" fill="none" stroke="#f7f71e" stroke-width="6.500" />
        <g clip-path="url(#tube)">
          <rect x="280" y="20" width="960" height="980" fill="url(#mArch)" />
          <path d="M280 1000V380C300 350 330 240 400 190L700 220L550 400V452L610 1000Z" fill="url(#mLeg)" filter="url(#soft)" />
          <path d="M280 1000V480L552 430L610 1000Z" fill="url(#mLeg)" opacity=".75" filter="url(#soft)" />
          <path d="M350 440C380 240 540 120 720 95Q890 75 1010 150" fill="none" stroke="#cacac8" stroke-width="70" filter="url(#soft)" />
          <path d="M990 255C1060 300 1110 380 1110 470Q1100 600 970 610" fill="none" stroke="#d2d2d0" stroke-width="80" filter="url(#soft)" />
          <path d="M1100 190C1190 290 1230 400 1200 520Q1170 620 1100 655" fill="none" stroke="#9d9d9b" stroke-width="50" filter="url(#soft)" />
          <path d="M330 950Q460 1010 590 910" fill="none" stroke="#838381" stroke-width="55" opacity=".55" filter="url(#soft)" />
        </g>
        <path d="M470 972L441 600C438 540 442 480 480 405C550 280 680 195 830 193C960 192 1040 255 1100 335C1140 400 1165 470 1148 535C1120 610 1060 640 1004 642" fill="none" stroke="#333" stroke-width="2.600" />
        <path d="M305 838C300 930 380 978 455 978C540 978 605 930 598 822" fill="none" stroke="#f7f71e" stroke-width="5" />
        <path d="M991 543L1004 657M997 548L1008 640" stroke="#333" stroke-width="2.500" fill="none" />

        <g stroke="#5c3d3b" stroke-width="2.600">
          <path d="M112 920V1003A73 62 0 0 0 258 1003V920Z" fill="#c3b1af" fill-opacity=".65" stroke="#bd9694" stroke-width="1.500" />
          <ellipse cx="185" cy="1003" rx="73" ry="62" fill="none" stroke="#a97878" />
          <ellipse cx="181" cy="890" rx="92" ry="77" fill="#b79a97" />
          <path d="M109 903A72 63 0 0 1 254 903Q250 945 218 962Q180 972 143 957Q110 935 109 903Z" fill="url(#mBore)" />
        </g>
        <path d="M144 956Q180 932 220 956Q180 975 144 956Z" fill="#fff" />
        <path d="M1301 800V850A72 58 0 0 0 1445 850V800Z" fill="#c3b1af" fill-opacity=".6" stroke="#a97878" stroke-width="2" />
        <path d="M1367 845H1378V872L1393 885L1375 912L1356 888L1367 875Z" fill="#8e9196" />
        <ellipse cx="1368" cy="732" rx="91" ry="77" fill="#dcdcdc" stroke="url(#mRing)" stroke-width="14" />
        <ellipse cx="1368" cy="734" rx="73" ry="61" fill="url(#mBore)" stroke="#c0740e" stroke-width="18" />
        <ellipse cx="1366" cy="731" rx="75" ry="63" fill="none" stroke="#f0a93a" stroke-width="4" />
        <path d="M1306 722A66 56 0 0 1 1430 722" fill="none" stroke="#6a4a20" stroke-width="2.500" />
        <g stroke="#2a7fd8" stroke-width="4"><path d="M153 890H170M176 890H186M192 890H208M181 862V880M183 895L185 915" /><path d="M1338 735H1356M1362 735H1374M1380 735H1398M1367 705V724M1369 742L1370 762" /></g>

        <g stroke="#14148a" stroke-width="3" fill="none">
          <path d="M168 793L181 890M168 803L270 789M322 784L437 769M436 760L452 855" />
          <path d="M962 253L1044 770M1286 212L1367 730M964 275L1102 260M1176 249L1287 235" />
          <path d="M947 401L957 480M962 515L980 592M795 615L1017 586" />
          <path d="M862 996L1062 969M1022 972L1033 1040M1040 1080L1050 1163" />
          <g fill="#b0b6dc"><path d="M168 803L203 793L204 804Z" /><path d="M437 769L402 767L403 778Z" /><path d="M964 275L1001 264L1002 276Z" /><path d="M1287 235L1252 233L1254 245Z" /><path d="M947 401L949 432L960 429Z" /><path d="M980 592L968 562L981 560Z" /><path d="M1022 972L1020 1004L1033 1001Z" /><path d="M1050 1163L1042 1132L1054 1130Z" /></g>
        </g>
        <g stroke="#222" stroke-width="3" stroke-dasharray="12 5"><path d="M770 617L802 611M791 590L799 636M831 998L863 993M852 970L860 1018" /></g>
        <circle cx="1046" cy="775" r="7" fill="#f4f420" />
        <g class="dims"><text x="272" y="800" textLength="48">7.5</text><text x="1105" y="266" textLength="69">8.96</text><text x="930" y="510" textLength="68">6.25</text><text x="1002" y="1072" textLength="68">6.25</text></g>
      </svg>

      <svg class="triad" width="60" height="50" viewBox="0 0 60 50">
        <text x="2" y="18" fill="#2222cc">Z</text><path d="M42 8L18 11" stroke="#2222cc" stroke-width="1.300" /><path d="M12 12L21 7V16Z" fill="#1414c0" />
        <path d="M42 8V20" stroke="#226622" stroke-width="1.200" /><circle cx="42" cy="19" r="6" fill="#a82020" /><path d="M36 20L48 18L43 34Z" fill="#1c7a1c" /><circle cx="41" cy="19" r="3" fill="#501010" /><text x="42" y="39" fill="#22cc22">Y</text>
      </svg>

      <div class="mini">
        <div class="grip"></div>
        <div class="minibody">
          <div class="entry"><div class="field">4 mm</div><span class="go"></span></div>
          <div class="acts">
            <div class="pair"><span><svg width="14" height="12" viewBox="0 0 14 12"><path d="M1 7L5 11L13 1" fill="none" stroke="#1e5c1e" stroke-width="2.400" /></svg></span><span><svg width="13" height="12" viewBox="0 0 13 12"><path d="M1.500 1L11.500 11M11.500 1L1.500 11" stroke="#b3161c" stroke-width="2.600" /></svg></span></div>
            <div class="opts"><svg width="18" height="18" viewBox="0 0 18 18"><rect x=".7" y=".7" width="16.600" height="16.600" fill="#fff" stroke="#26364f" stroke-width="1.400" /><path d="M1 2.500H17" stroke="#26364f" stroke-width="3" /><path d="M8 7.500H16" stroke="#2a80d8" stroke-width="1.500" /><path d="M8 13H16" stroke="#333" stroke-width="1.500" /><rect x="2.800" y="6" width="3" height="3" fill="none" stroke="#2a80d8" /><rect x="2.800" y="11.500" width="3" height="3" fill="none" stroke="#333" /></svg><i></i></div>
          </div>
        </div>
      </div>

      <svg class="winctl" width="54" height="14" viewBox="0 0 54 14"><g fill="none" stroke="#444" stroke-width="1.300"><rect x="1" y="7" width="11" height="3.500" /><path d="M21 4V12.500H29V4ZM23.500 4V1.500H31.500V10H29M23.500 7H26.500V10H23.500Z" /><path d="M41 2H44L46 4.500L48 2H51L48.500 6.500L51 11.500H48L46 9L44 11.500H41L43.500 6.500Z" /></g></svg>

      <svg class="viewcube" width="90" height="90" viewBox="0 0 270 270">
        <defs><filter id="cs" x="-30%" y="-30%" width="160%" height="160%"><feGaussianBlur stdDeviation="12" /></filter></defs>
        <path d="M45 40L165 20L190 60L50 120Z" fill="#777" filter="url(#cs)" opacity=".6" />
        <path d="M53 48L198 31L229 149L215 229L82 245L62 166Z" fill="#f1f1f3" />
        <path d="M53 48L198 31L229 149L62 166Z" fill="#e8e8ea" />
        <path d="M100 146L195 135L200 160L105 175Z" fill="#dfe1ea" />
        <path d="M53 48L198 31L229 149L215 229L82 245L62 166ZM62 166L229 149" fill="none" stroke="#888" stroke-width="3" stroke-dasharray="24 8" />
        <text x="0" y="0" transform="translate(173,83) rotate(173)" class="cubet">LEFT</text>
        <text x="0" y="0" transform="translate(134,184) rotate(83) scale(.72 1.3)" class="cubet thin">TOP</text>
      </svg>

      <div class="navbar">
        <svg class="xs" width="8" height="8" viewBox="0 0 8 8"><circle cx="4" cy="4" r="3.500" fill="#ccc" stroke="#aaa" /><path d="M2.500 2.500L5.500 5.500M5.500 2.500L2.500 5.500" stroke="#fff" /></svg>
        <svg width="22" height="22" viewBox="0 0 22 22"><g fill="#eef0f2" stroke="#8c8c8c" stroke-width="1.200"><path d="M11 1H21V11A10 10 0 1 1 11 1Z" /><circle cx="11" cy="11" r="5.500" /><path d="M5 17L7 15M15 15L17 17" /></g></svg>
        <i class="caret"></i><hr />
        <svg width="18" height="18" viewBox="0 0 18 18"><path d="M5 11L2 7Q1 6 3 6L6 9L5 3Q6 1 7.500 3L8.500 7L9 2Q10 0 11 2L11.500 7L13 3Q14 2 14.500 4L14 9L16 7Q17.500 7 16.500 9L13 16Q9 18 6 15Z" fill="#f4f4f4" stroke="#777" stroke-width="1.100" /></svg>
        <svg width="17" height="17" viewBox="0 0 17 17"><circle cx="7" cy="7" r="6" fill="#eee" stroke="#888" stroke-width="1.400" /><rect x="4.500" y="4.500" width="5" height="5" fill="#ddd" stroke="#777" /><path d="M11 11L16 16" stroke="#888" stroke-width="3" /></svg>
        <i class="caret"></i>
        <svg width="18" height="18" viewBox="0 0 18 18"><path d="M6 4Q6 1 9 1T12 7M12 11Q12 17 9 17T6 12M6 6Q1 6 1 9T5 12M12 6Q16 6 17 9M9 5V9M7 7H11M12 12L17 9L14 5M9 12H13" fill="none" stroke="#888" stroke-width="1.100" /></svg>
        <i class="caret"></i>
        <svg width="17" height="16" viewBox="0 0 17 16"><path d="M1 4L4 1L5 4L10 1V4H16V15H1Z" fill="#eee" stroke="#888" /><rect x="3.500" y="7.500" width="9" height="5" fill="#ccc" stroke="#888" /></svg>
        <svg class="xs end" width="8" height="8" viewBox="0 0 8 8"><circle cx="4" cy="4" r="3.500" fill="#eee" stroke="#aaa" /><path d="M2 4H6" stroke="#999" /></svg>
      </div>
    </section>
  </main>

  <div class="dialog">
    <div class="dtitle">Hole : Hole1<svg width="13" height="13" viewBox="0 0 13 13"><path d="M.7 .7L12.300 12.300M12.300 .7L.7 12.300" stroke="#777" stroke-width="1.200" /></svg></div>
    <div class="row top">
      <div class="group place"><span class="legend">Placement</span>
        <div class="select"><svg width="15" height="13" viewBox="0 0 15 13"><path d="M4 .7H14.300L11 12.300H.7Z" fill="#f3d8f3" stroke="#111" stroke-width="1.200" /><path d="M5 9H7M6 8V10M9 4H11M10 3V5" stroke="#c0c" /></svg><span>From Sketch</span>{@render chev()}</div>
        <div class="pick first"><span class="pickbtn on"><svg width="12" height="17" viewBox="0 0 12 17"><path d="M1.500 1V13L4.500 10.500L7 16L9 15L6.800 9.800H10.500Z" fill="#fff" stroke="#333" /></svg></span>Centers (2)</div>
        <div class="pick"><span class="pickbtn"><svg width="12" height="17" viewBox="0 0 12 17"><path d="M1.500 1V13L4.500 10.500L7 16L9 15L6.800 9.800H10.500Z" fill="#ddd" stroke="#999" /></svg></span>Solids</div>
      </div>
      <div class="group heads">
        {#each heads as d, n}
          <div class="hrow">{@render radio(n === 3)}
            <svg width="27" height="29" viewBox="0 -3 27 29"><rect width="14" height="26" fill="url(#{n ? 'hDark' : 'hLight'})" /><rect x="13" width="14" height="26" fill="url(#{n ? 'hDarkR' : 'hLightR'})" /><path {d} fill="#fff" stroke={n ? '#14307a' : '#111'} stroke-width={n ? 1 : 1.800} /><path d="M0 .5H9M18 .5H27" stroke="#111" stroke-width="1.500" /><path d="M13.500 -3V26" stroke="#d01818" stroke-width="1.300" stroke-dasharray="7 2" /></svg>
          </div>
        {/each}
      </div>
      <div class="group dimsbox">
        <svg class="fig" width="135" height="173" viewBox="21 90 405 520">
          <defs><pattern id="hFig" width="13" height="13" patternUnits="userSpaceOnUse" patternTransform="rotate(-48)"><rect width="13" height="13" fill="#a3cdf2" /><rect width="4.500" height="13" fill="#4f7ca6" /></pattern></defs>
          <g stroke="#111" fill="none">
            <path d="M187 110V270M130 185L184 270M301 110V270M357 185L301 270M217 495V580M271 495V580" stroke-width="4" />
            <path d="M303 110V270M219 495V580" stroke="#666" stroke-width="4" />
            <path d="M112 281H190L215 325V480H152L158 400Q155 330 120 285Z" fill="url(#hFig)" stroke="none" />
            <path d="M300 281H352V432H317V480H272V325Z" fill="url(#hFig)" stroke="none" />
            <path d="M190 281L215 325H272L297 281Z" fill="#f0f0f0" stroke-width="3" />
            <path d="M112 281H352V432H317V481H150M214 325V480M272 325V480" stroke-width="3.500" />
          </g>
          <g stroke="#e01010" stroke-width="11"><path d="M200 126H288M303 126H417" /><path d="M360 229H417" stroke-width="8" /><path d="M105 246L130 220" stroke-width="7" /><path d="M162 555H200M285 555H424" /></g>
          <g fill="#e80000"><path d="M188 126L207 110V142ZM298 126L279 110V142ZM348 210L372 212L352 232ZM142 210L118 212L140 232ZM214 555L196 538V572ZM272 555L291 538V572Z" /></g>
        </svg>
        <div class="vals">{@render value('5 mm')}{@render value('90 deg')}{@render value('4 mm')}</div>
      </div>
    </div>
    <div class="row mid">
      <div class="group drill"><span class="legend">Drill Point</span>
        {@render radio(false, true)}
        <svg width="26" height="24" viewBox="0 0 26 24"><path d="M1 3H25V21H1Z" fill="url(#gDrill)" /><path d="M1 1V21H25V1" fill="none" stroke="#777" /></svg>
        {@render radio(true, true)}
        <svg width="26" height="24" viewBox="0 0 26 24"><path d="M1 3H25V19L13 23L1 19Z" fill="url(#gDrill)" /><path d="M1 1V19L13 23L25 19V1" fill="none" stroke="#777" /></svg>
        <div class="deg"><span>118 deg</span><svg width="8" height="12" viewBox="0 0 8 12"><path d="M1.500 1.500L6 6L1.500 10.500" fill="none" stroke="#aaa" stroke-width="2" /></svg></div>
      </div>
      <div class="group term"><span class="legend">Termination</span>
        <div class="select"><span>Through All</span>{@render chev()}</div>
        <span class="dirbtn on"><svg width="18" height="20" viewBox="0 0 18 20"><path d="M4 3L16 8V17L4 11Z" fill="#f4a266" stroke="#a85a24" /><path d="M9 11L2 18M1.500 14V18.500H6" fill="none" stroke="#222" stroke-width="1.700" /></svg></span>
        <span class="dirbtn"><svg width="18" height="20" viewBox="0 0 18 20"><path d="M2 3L14 8V18L2 12Z" fill="#f4a266" stroke="#a85a24" /><path d="M9 8L16 1.500M12 1H16.500V5.500" fill="none" stroke="#222" stroke-width="1.700" /></svg></span>
      </div>
    </div>
    <div class="row types">
      {#each kinds as k, n}
        <div class="kind">{@render radio(n === 0)}
          <svg width="27" height="28" viewBox="0 0 27 31" preserveAspectRatio="none">
            <rect width="13.500" height="31" fill="url(#{n < 2 ? 'hDark' : 'hLight'})" /><rect x="13.500" width="13.500" height="31" fill="url(#{n < 2 ? 'hDarkR' : 'hLightR'})" />
            {#if k === 'plain'}<rect x="7.500" width="12" height="31" fill="#fff" />
            {:else if k === 'clear'}<rect x="7.500" width="12" height="31" fill="#fff" /><path d="M10 0V22L12 24H15L17 22V0" fill="none" stroke="#222" stroke-width="1.200" />
            {:else if k === 'tapped'}<rect x="7" width="13" height="31" fill="#fff" /><path d="M7.500 0V31M19.500 0V31M7.500 3H19.500M10 7H17M7.500 11H19.500M10 15H17M7.500 19H19.500M10 23H17M7.500 27H19.500" stroke="#222" stroke-width="1.500" />
            {:else}<path d="M3 0H24L17 22V31H10V22Z" fill="#fff" /><path d="M3 0L10 22V31M24 0L17 22V31M4 3H23M8 7H19M7 11H20M10 15H17M9 19H18" fill="none" stroke="#222" stroke-width="1.600" />{/if}
            <path d="M13.500 0V31" stroke="#d01818" stroke-width="1.300" stroke-dasharray="8 3" />
          </svg>
        </div>
      {/each}
      <div class="group extend"><span class="check"></span>Extend Start</div>
    </div>
    <div class="row foot">
      <div class="dbtn help"><svg width="16" height="17" viewBox="0 0 16 17"><path d="M1 1H15V13H11L9 16L9 13H1Z" fill="#f2f4f6" stroke="#3d4a5c" stroke-width="1.300" /></svg><b>?</b></div>
      <div class="group prev"><span class="check"><svg width="12" height="10" viewBox="0 0 12 10"><path d="M1 5L4.500 8.500L11 1" fill="none" stroke="#222" stroke-width="1.500" /></svg></span>
        <svg width="29" height="15" viewBox="0 0 29 15"><g fill="none" stroke="#222" stroke-width="1.300"><path d="M2 6Q3 1 6 1.500M24 5L27 1V6M11 5Q13 3 14 5" /><path d="M2 5H11V10Q9 14 6 14T2 10ZM14 5H23V10Q21 14 18 14T14 10Z" fill="#d7e6ea" /></g></svg></div>
      <div class="dbtn ok">OK</div><div class="dbtn cancel">Cancel</div>
    </div>
  </div>
</div>

<style>
  :global(body) { margin: 0; background: #fff; overflow: hidden; }
  .app { position: relative; width: 1920px; height: 968px; overflow: hidden; font: 14px/20px "Open Sans", "Noto Sans", sans-serif; color: #3a3a3a; display: flex; flex-direction: column; }
  .app * { box-sizing: border-box; }
  .defs { position: absolute; }
  svg { display: block; flex: none; }
  .ico { overflow: visible; }
  i { font-style: normal; }
  .caret { display: inline-block; border: 3.500px solid transparent; border-top: 4px solid #3a3a3a; border-bottom: 0; flex: none; }
  .caret.big { border-width: 5px 5px 0; }
  .caret.light { border-top-color: #d8d8d8; }
  .caret.faint { border-top-color: #999; }

  .titlebar { height: 32px; background: #505050; display: flex; color: #d2d2d2; }
  .logo { width: 27px; margin-right: -27px; padding-top: 2px; display: flex; flex-direction: column; align-items: center; color: #e8912f; }
  .logo b { font: 700 6.500px/8px "Open Sans", sans-serif; }
  .quick { display: flex; height: 27px; align-items: center; }
  .q { flex: none; display: flex; align-items: center; justify-content: center; height: 27px; white-space: nowrap; }
  .q.low { padding-top: 2px; }
  .qt { font-size: 13.500px; flex: 1; letter-spacing: .04px; }
  .combo { width: 100%; height: 27px; background: #929292; color: #4c4c4c; display: flex; align-items: center; padding: 0 4px 0 9px; }
  .combo :global(.ico) { margin: 0 5px 0 -4px; }
  .combo span:nth-last-child(2) { flex: 1; }
  .combo .caret { border-top-color: #404040; }
  .fx { font: italic 700 19px/20px "Liberation Serif", serif; color: #242424; }
  .fx sub { font-size: 13px; vertical-align: -5px; line-height: 0; }
  .play { border: 5px solid transparent; border-left-color: #ddd; border-right: 0; }
  .search { width: 100%; height: 25px; margin-bottom: 2px; background: #929292; color: #d6d6d6; padding: 2px 6px; font-size: 13.800px; }
  .vsep { width: 1px; height: 22px; background: #888; }
  .helpc { width: 20px; height: 20px; border-radius: 50%; background: #e6e9f0; color: #3a58a8; font: 700 15px/20px "Open Sans", sans-serif; text-align: center; }
  .minb { width: 10px; height: 3px; background: #e6e6e6; margin-top: 10px; }

  .tabs { height: 25px; background: #505050; display: flex; }
  .tab { color: #cfcfcf; text-align: center; line-height: 25px; font-size: 14px; flex: none; padding-left: 1px; white-space: nowrap; }
  .tab.file { width: 54px; padding: 0 1px 0 0; background: #ef8022; color: #fff; margin-right: 3px; }
  .tab.active { width: 88px; background: #f5f5f5; color: #555; }
  .updown { display: flex; align-items: center; gap: 8px; margin-left: 27px; }
  .pill { width: 16px; height: 9px; border-radius: 2px; background: #e4e4ea; display: flex; align-items: center; justify-content: center; }
  .pill i { border: 3.500px solid transparent; border-top: 0; border-bottom: 4px solid #444; }

  .ribbon { height: 119px; background: #f5f5f5; display: flex; }
  .panel { flex: none; border-right: 1px solid #d6d6d6; display: flex; flex-direction: column; }
  .cols { display: flex; height: 99px; padding-top: 4px; }
  .col { flex: none; display: flex; flex-direction: column; }
  .item { height: 31px; display: flex; align-items: center; padding-bottom: 2px; gap: 7px; white-space: nowrap; font-size: 13.800px; }
  .item .caret { margin-top: -1px; }
  .bigbtn { position: relative; display: flex; flex-direction: column; align-items: center; white-space: nowrap; font-size: 13.800px; padding-top: 1px; line-height: 20px; }
  .bigbtn :global(.ico) { margin-bottom: 5px; }
  .bigbtn.two :global(.ico) { margin-bottom: 7px; }
  .bigbtn .caret { margin-top: 3px; }
  .bigbtn .flank { position: absolute; right: 6px; top: 65px; }
  .sq { width: 29px; height: 27px; margin-bottom: 4px; border: 1px solid #c6c6c8; display: flex; align-items: center; justify-content: center; background: #f9f9f9; }
  .plabel { text-align: center; height: 20px; line-height: 20px; font-size: 13.800px; white-space: nowrap; }
  .plabel .caret { margin-left: 7px; vertical-align: 2px; }
  .tailbtn { width: 43px; height: 27px; margin: 4px 0 0 3px; border: 1px solid #c8c8c8; display: flex; align-items: center; padding-left: 3px; gap: 7px; }

  .work { flex: 1; display: flex; background: #fff; min-height: 0; }
  .side { width: 446px; border-right: 4px solid #4e4e4e; font: 12px/25px "Noto Sans", sans-serif; color: #111; letter-spacing: -.05px; }
  .sidehead { display: flex; height: 25px; width: 446px; background: #606060; }
  .mtab { width: 80px; background: #fff; color: #555; padding-left: 8px; display: flex; align-items: center; gap: 15px; }
  .mplus { padding: 8px 6px; }
  .node { display: flex; height: 25px; align-items: center; white-space: nowrap; }
  .node.root { padding-left: 3px; }
  .node span { margin-left: 4px; }
  .node.bold { font-weight: 700; }
  .node.dim { color: #777; }

  .view { flex: 1; position: relative; }
  .part { position: absolute; left: 474px; top: 254px; }
  .dims text { font: 35px "Noto Sans", sans-serif; fill: #2a2a90; }
  .triad { position: absolute; left: 11px; top: 733px; font: 12px "Noto Sans", sans-serif; }
  .mini { position: absolute; left: 466px; top: 55px; display: flex; gap: 2px; font: 12.500px/18px "Noto Sans", sans-serif; color: #111; }
  .grip { width: 10px; height: 26px; border: 1px solid #aaa; border-radius: 4px; background: #ddd; }
  .entry { width: 128px; height: 26px; border: 1px solid #aaa; border-radius: 13px 10px 10px 13px; background: linear-gradient(#eee, #ccc); display: flex; align-items: center; padding-left: 10px; }
  .field { width: 103px; height: 21px; background: #fff; border: 1px solid #777; padding-left: 3px; }
  .go { margin-left: 4px; border: 5px solid transparent; border-left: 6px solid #333; border-right: 0; }
  .acts { display: flex; gap: 9px; margin-top: 8px; }
  .pair, .opts { height: 25px; border: 1px solid #aaa; border-radius: 13px; background: linear-gradient(#f0f0f0, #d2d2d2); display: flex; align-items: center; }
  .pair { width: 64px; }
  .pair span { width: 32px; height: 100%; display: flex; align-items: center; justify-content: center; padding-right: 3px; }
  .pair span + span { border-left: 1px solid #aaa; }
  .opts { width: 42px; gap: 3px; padding-left: 5px; }
  .opts i { border: 5px solid transparent; border-top: 6px solid #333; border-bottom: 0; }
  .winctl { position: absolute; left: 1421px; top: 5px; }
  .viewcube { position: absolute; left: 1367px; top: 39px; overflow: visible; }
  .cubet { font: 700 27px "Open Sans", sans-serif; fill: #999; }
  .cubet.thin { font-weight: 600; font-size: 24px; }
  .navbar { position: absolute; left: 1439px; top: 144px; width: 38px; height: 200px; border: 2px solid #c8c8c8; border-radius: 5px; background: #f6f6f6; display: flex; flex-direction: column; align-items: center; padding: 3px 1px 0 0; }
  .navbar .xs { margin-left: 19px; margin-bottom: 10px; }
  .navbar .end { margin: 11px 0 0 19px; }
  .navbar .caret { border-top-color: #999; border-width: 3px 3px 0; margin: 7px 0 7px; }
  .navbar hr { width: 26px; margin: -3px 0 6px; border: 0; border-top: 1px solid #bbb; }
  .navbar hr + svg { margin-bottom: 6px; }

  .dialog { position: absolute; left: 338px; top: 179px; width: 555px; height: 458px; background: #f0f0f0; border: 1px solid #a3a3a3; box-shadow: 2px 3px 9px rgba(0, 0, 0, .38); font: 12px/16px "Noto Sans", sans-serif; color: #111; display: flex; flex-direction: column; }
  .dtitle { height: 37px; background: #fff; color: #999; display: flex; align-items: center; justify-content: space-between; padding: 0 14px 0 9px; font: 14px/20px "Open Sans", sans-serif; }
  .row { display: flex; }
  .group { position: relative; border: 1px solid #dcdcdc; }
  .legend { position: absolute; left: 5px; top: -9px; background: #f0f0f0; padding: 0 3px; white-space: nowrap; }
  .top { margin: 23px 0 0 9px; height: 231px; flex: none; }
  .place { width: 200px; padding: 15px 0 0 11px; margin-right: 5px; }
  .select { display: flex; align-items: center; justify-content: space-between; background: #e2e2e2; border: 1px solid #a6a6a6; height: 26px; padding: 0 5px 0 4px; }
  .select span { flex: 1; margin-left: 4px; }
  .place .select { width: 181px; }
  .pick { display: flex; gap: 6px; margin: 10px 0 0 3px; line-height: 27px; }
  .pick.first { margin-top: 25px; }
  .pickbtn { width: 28px; height: 30px; background: #cbcbcb; border: 1px solid #c0c0c0; display: flex; align-items: center; justify-content: center; }
  .pickbtn.on, .dirbtn.on { background: #cce4f7; border-color: #005499; }
  .heads { width: 61px; margin-right: 3px; padding: 15px 0 0 6px; }
  .hrow { display: flex; align-items: center; gap: 5px; height: 40px; margin-bottom: 12px; }
  .hrow svg { margin-top: -2px; }
  .radio { width: 16px; height: 16px; border-radius: 50%; border: 1.300px solid #333; background: #fff; flex: none; }
  .radio.on { background: radial-gradient(circle, #2b2b2b 0 4.600px, #fff 5.300px); }
  .radio.dimmed { border-color: #c4c4c4; }
  .radio.on.dimmed { background: radial-gradient(circle, #c4c4c4 0 4.600px, #fff 5.300px); }
  .dimsbox { width: 266px; display: flex; }
  .fig { margin: 9px 0 0 -1px; }
  .value { width: 114px; height: 24px; border: 1px solid #7a7a7a; background: #fff; display: flex; align-items: center; padding-left: 5px; margin-bottom: 10px; }
  .value span { flex: 1; }
  .value i { width: 20px; height: 22px; background: #f0f0f0; display: flex; align-items: center; justify-content: center; }
  .vals { padding-top: 9px; }
  .vals .value:last-child { margin-top: 86px; }
  .mid { margin: 13px 0 0 9px; height: 51px; flex: none; }
  .drill { width: 265px; margin-right: 4px; display: flex; align-items: center; padding: 10px 0 0 6px; gap: 6px; }
  .drill svg + .radio { margin-left: 14px; }
  .deg { width: 106px; height: 25px; border: 1px solid #bbb; display: flex; align-items: center; justify-content: space-between; padding: 1px 7px 1px 1px; margin: -6px 0 0 14px; color: #777; }
  .deg span { background: #c8c8c8; width: 84px; height: 21px; line-height: 20px; padding-left: 4px; }
  .term { width: 266px; display: flex; align-items: center; padding: 13px 0 0 10px; }
  .term .select { width: 119px; height: 25px; margin: -4px 8px 0 0; }
  .term .select span { margin-left: 0; }
  .dirbtn { width: 28px; height: 30px; margin-right: 7px; border: 1px solid #adadad; background: #e1e1e1; display: flex; align-items: center; justify-content: center; }
  .types { margin: 13px 0 0 16px; align-items: center; height: 37px; flex: none; }
  .kind { display: flex; align-items: center; gap: 5px; width: 70px; padding-top: 4px; }
  .extend { width: 229px; height: 37px; margin-left: 17px; display: flex; align-items: center; gap: 3px; padding: 3px 0 0 10px; }
  .check { width: 16px; height: 16px; border: 1px solid #333; background: #fff; display: flex; align-items: center; justify-content: center; }
  .foot { margin: 5px 0 0 10px; }
  .dbtn { height: 26px; border: 1px solid #adadad; background: #e1e1e1; display: flex; align-items: center; justify-content: center; margin-top: 1px; }
  .help { width: 26px; position: relative; }
  .help b { position: absolute; top: 3px; left: 9px; font-size: 11px; }
  .prev { width: 72px; height: 29px; margin: 0 7px 0 150px; display: flex; align-items: center; gap: 6px; padding: 3px 0 0 4px; }
  .ok { width: 87px; margin-right: 10px; }
  .cancel { width: 87px; }
</style>
